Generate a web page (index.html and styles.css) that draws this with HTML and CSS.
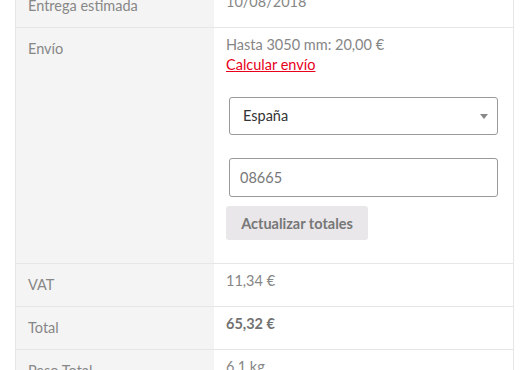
FILE: index.html
```html
<!DOCTYPE html>
<html lang="es">
<head>
    <meta charset="UTF-8">
    <meta name="viewport" content="width=device-width, initial-scale=1.0">
    <title>Totales del carrito</title>
    <link rel="stylesheet" href="styles.css">
</head>
<body>
    <div class="cart-totals">
        <table class="totals-table">
            <tr>
                <th>Entrega estimada</th>
                <td>10/08/2018</td>
            </tr>
            <tr class="shipping">
                <th>Envío</th>
                <td>
                    <div class="rate">Hasta 3050 mm: 20,00 €</div>
                    <a href="#" class="calc-link">Calcular envío</a>
                    <form class="calc-form">
                        <div class="select-box">
                            <span>España</span>
                            <span class="arrow"></span>
                        </div>
                        <input type="text" class="postcode" value="08665">
                        <button type="button" class="update-btn">Actualizar totales</button>
                    </form>
                </td>
            </tr>
            <tr>
                <th>VAT</th>
                <td>11,34 €</td>
            </tr>
            <tr>
                <th>Total</th>
                <td><strong>65,32 €</strong></td>
            </tr>
            <tr>
                <th>Peso Total</th>
                <td>6,1 kg</td>
            </tr>
        </table>
    </div>
</body>
</html>
```

FILE: styles.css
```css
/* totales del carrito */
body {
    margin: 0;
    padding: 0;
    background: #fff;
    font-family: Lato, "Open Sans", sans-serif;
    font-size: 14.5px;
    color: #888;
}

.cart-totals {
    margin: -16px 0 0 15px;
    width: 499px;
}

.totals-table {
    width: 100%;
    border-collapse: collapse;
    border: 1px solid #e6e6e6;
}

.totals-table th,
.totals-table td {
    border-top: 1px solid #e6e6e6;
    line-height: 20px;
    text-align: left;
}

.totals-table th {
    width: 174px;
    padding: 11px 12px;
    background: #f4f4f4;
    font-weight: normal;
    color: #878787;
    vertical-align: middle;
}

.totals-table td {
    padding: 7px 12px 15px;
    vertical-align: top;
    color: #868686;
}

.totals-table strong {
    color: #727272;
}

.shipping th {
    vertical-align: top;
}

.shipping td {
    padding-bottom: 23px;
}

.calc-link {
    color: #e8001c;
    text-decoration: underline;
}

.calc-form {
    margin-top: 22px;
}

.select-box {
    display: flex;
    align-items: center;
    justify-content: space-between;
    box-sizing: border-box;
    height: 38px;
    margin-left: 3px;
    width: 269px;
    padding: 0 9px 0 13px;
    border: 1px solid #999;
    border-radius: 3px;
    color: #333;
}

.arrow {
    width: 0;
    height: 0;
    border-left: 4px solid transparent;
    border-right: 4px solid transparent;
    border-top: 5px solid #888;
}

.postcode {
    display: block;
    box-sizing: border-box;
    width: 269px;
    height: 39px;
    margin: 23px 0 9px 3px;
    padding: 0 10px;
    border: 1px solid #999;
    border-radius: 3px;
    font-family: inherit;
    font-size: 14.5px;
    color: #777;
    outline: none;
}

.update-btn {
    height: 34px;
    width: 142px;
    padding: 0;
    border: none;
    border-radius: 3px;
    background: #e9e7ea;
    color: #777;
    font-family: inherit;
    font-size: 14.5px;
    font-weight: bold;
}
```
